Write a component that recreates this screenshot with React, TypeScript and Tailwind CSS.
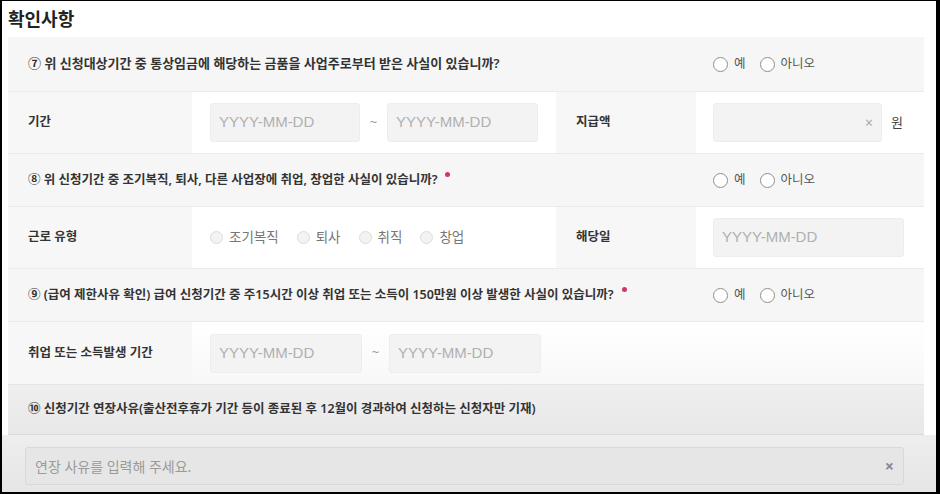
import React from 'react';

const font = 'font-["Noto_Sans","Noto_Sans_CJK_KR",sans-serif]';

function Radio({ label, muted = false }: { label: string; muted?: boolean }) {
  return (
    <label className="flex items-center gap-[6px]">
      <span
        className={`inline-block rounded-full border ${
          muted ? 'w-[13px] h-[13px] border-[#dcdcdc] bg-[#f3f3f3]' : 'w-[15px] h-[15px] border-[#8f8f8f] bg-white'
        }`}
      />
      <span className={muted ? 'text-[13.5px] text-[#777]' : 'text-[12.5px] text-[#555]'}>{label}</span>
    </label>
  );
}

function YesNo() {
  return (
    <div className="w-[211px] flex items-center gap-[14px]">
      <Radio label="예" />
      <Radio label="아니오" />
    </div>
  );
}

function Required() {
  return <span className="inline-block ml-[8px] w-[5px] h-[5px] rounded-full bg-[#d6336c] relative -top-[7px]" />;
}

function Question({ text, required = false, h, size = 'text-[12.5px]' }: { text: string; required?: boolean; h: string; size?: string }) {
  return (
    <div className={`${h} flex items-center bg-[#f6f6f6] border-b border-[#ebebeb] pl-[20px]`}>
      <div className={`flex-1 ${size} font-semibold text-[#333] whitespace-nowrap`}>
        {text}
        {required && <Required />}
      </div>
      <YesNo />
    </div>
  );
}

function DateInput({ w = 'w-[151px]' }: { w?: string }) {
  return (
    <div
      className={`${w} h-[39px] rounded-[3px] bg-[#f3f3f3] border border-[#ededed] flex items-center pl-[8px] font-["Liberation_Sans",sans-serif] text-[15px] text-[#b0b0b0]`}
    >
      YYYY-MM-DD
    </div>
  );
}

function Label({ children, w }: { children: React.ReactNode; w: string }) {
  return (
    <div className={`${w} bg-[#f7f7f7] pl-[20px] flex items-center text-[12.5px] font-semibold text-[#333]`}>
      {children}
    </div>
  );
}

export default function App() {
  return (
    <div className={`w-[940px] h-[494px] bg-black pt-px pl-[2px] pr-[4px] pb-[2px] ${font}`}>
      <div className="h-full bg-white flex flex-col overflow-hidden">
        <div className="h-[36px] pl-[6px] flex items-center">
          <h2 className="text-[18px] font-bold text-[#222]">확인사항</h2>
        </div>

        <div className="ml-[6px] w-[916px]">
          <Question
            h="h-[55px]"
            size="text-[13px]"
            text="⑦ 위 신청대상기간 중 통상임금에 해당하는 금품을 사업주로부터 받은 사실이 있습니까?"
          />

          <div className="h-[62px] flex border-b border-[#ebebeb]">
            <Label w="w-[184px]">기간</Label>
            <div className="w-[364px] bg-white pl-[18px] flex items-center">
              <DateInput w="w-[150px]" />
              <span className="w-[27px] text-center text-[13px] text-[#999]">~</span>
              <DateInput />
            </div>
            <Label w="w-[140px]">지급액</Label>
            <div className="flex-1 bg-white pl-[17px] flex items-center">
              <div className="w-[169px] h-[39px] rounded-[3px] bg-[#f3f3f3] border border-[#ededed] flex items-center justify-end pr-[8px] text-[14px] text-[#aaa]">
                ×
              </div>
              <span className="ml-[9px] text-[13px] text-[#444]">원</span>
            </div>
          </div>

          <Question h="h-[53px]" required text="⑧ 위 신청기간 중 조기복직, 퇴사, 다른 사업장에 취업, 창업한 사실이 있습니까?" />

          <div className="h-[62px] flex border-b border-[#ebebeb]">
            <Label w="w-[184px]">근로 유형</Label>
            <div className="w-[364px] bg-white pl-[18px] flex items-center gap-[18px]">
              <Radio muted label="조기복직" />
              <Radio muted label="퇴사" />
              <Radio muted label="취직" />
              <Radio muted label="창업" />
            </div>
            <Label w="w-[140px]">해당일</Label>
            <div className="flex-1 bg-white pl-[17px] flex items-center">
              <DateInput w="w-[191px]" />
            </div>
          </div>

          <Question
            h="h-[53px]"
            required
            text="⑨ (급여 제한사유 확인) 급여 신청기간 중 주15시간 이상 취업 또는 소득이 150만원 이상 발생한 사실이 있습니까?"
          />

          <div className="h-[63px] flex border-b border-[#e6e6e6]">
            <Label w="w-[184px]">취업 또는 소득발생 기간</Label>
            <div className="flex-1 bg-gradient-to-b from-white to-[#f8f8f8] pl-[18px] flex items-center">
              <DateInput w="w-[152px]" />
              <span className="w-[27px] text-center text-[13px] text-[#999]">~</span>
              <DateInput w="w-[152px]" />
            </div>
          </div>

          <div className="h-[50px] flex items-center bg-gradient-to-b from-[#efefef] to-[#e8e8e8] border-b border-[#d9d9d9] pl-[20px]">
            <div className="text-[12.5px] font-semibold text-[#333] whitespace-nowrap">
              ⑩ 신청기간 연장사유(출산전후휴가 기간 등이 종료된 후 12월이 경과하여 신청하는 신청자만 기재)
            </div>
          </div>
        </div>

        <div className="flex-1 bg-gradient-to-b from-[#eeeeee] to-[#e6e6e6] pt-[12px] pl-[23px]">
          <div className="w-[879px] h-[38px] rounded-[3px] bg-[#e6e6e6] border border-[#d8d8d8] flex items-center justify-between pl-[9px] pr-[9px]">
            <span className="text-[14px] text-[#9a9a9a]">연장 사유를 입력해 주세요.</span>
            <span className="text-[16px] font-bold text-[#888]">×</span>
          </div>
        </div>
      </div>
    </div>
  );
}
